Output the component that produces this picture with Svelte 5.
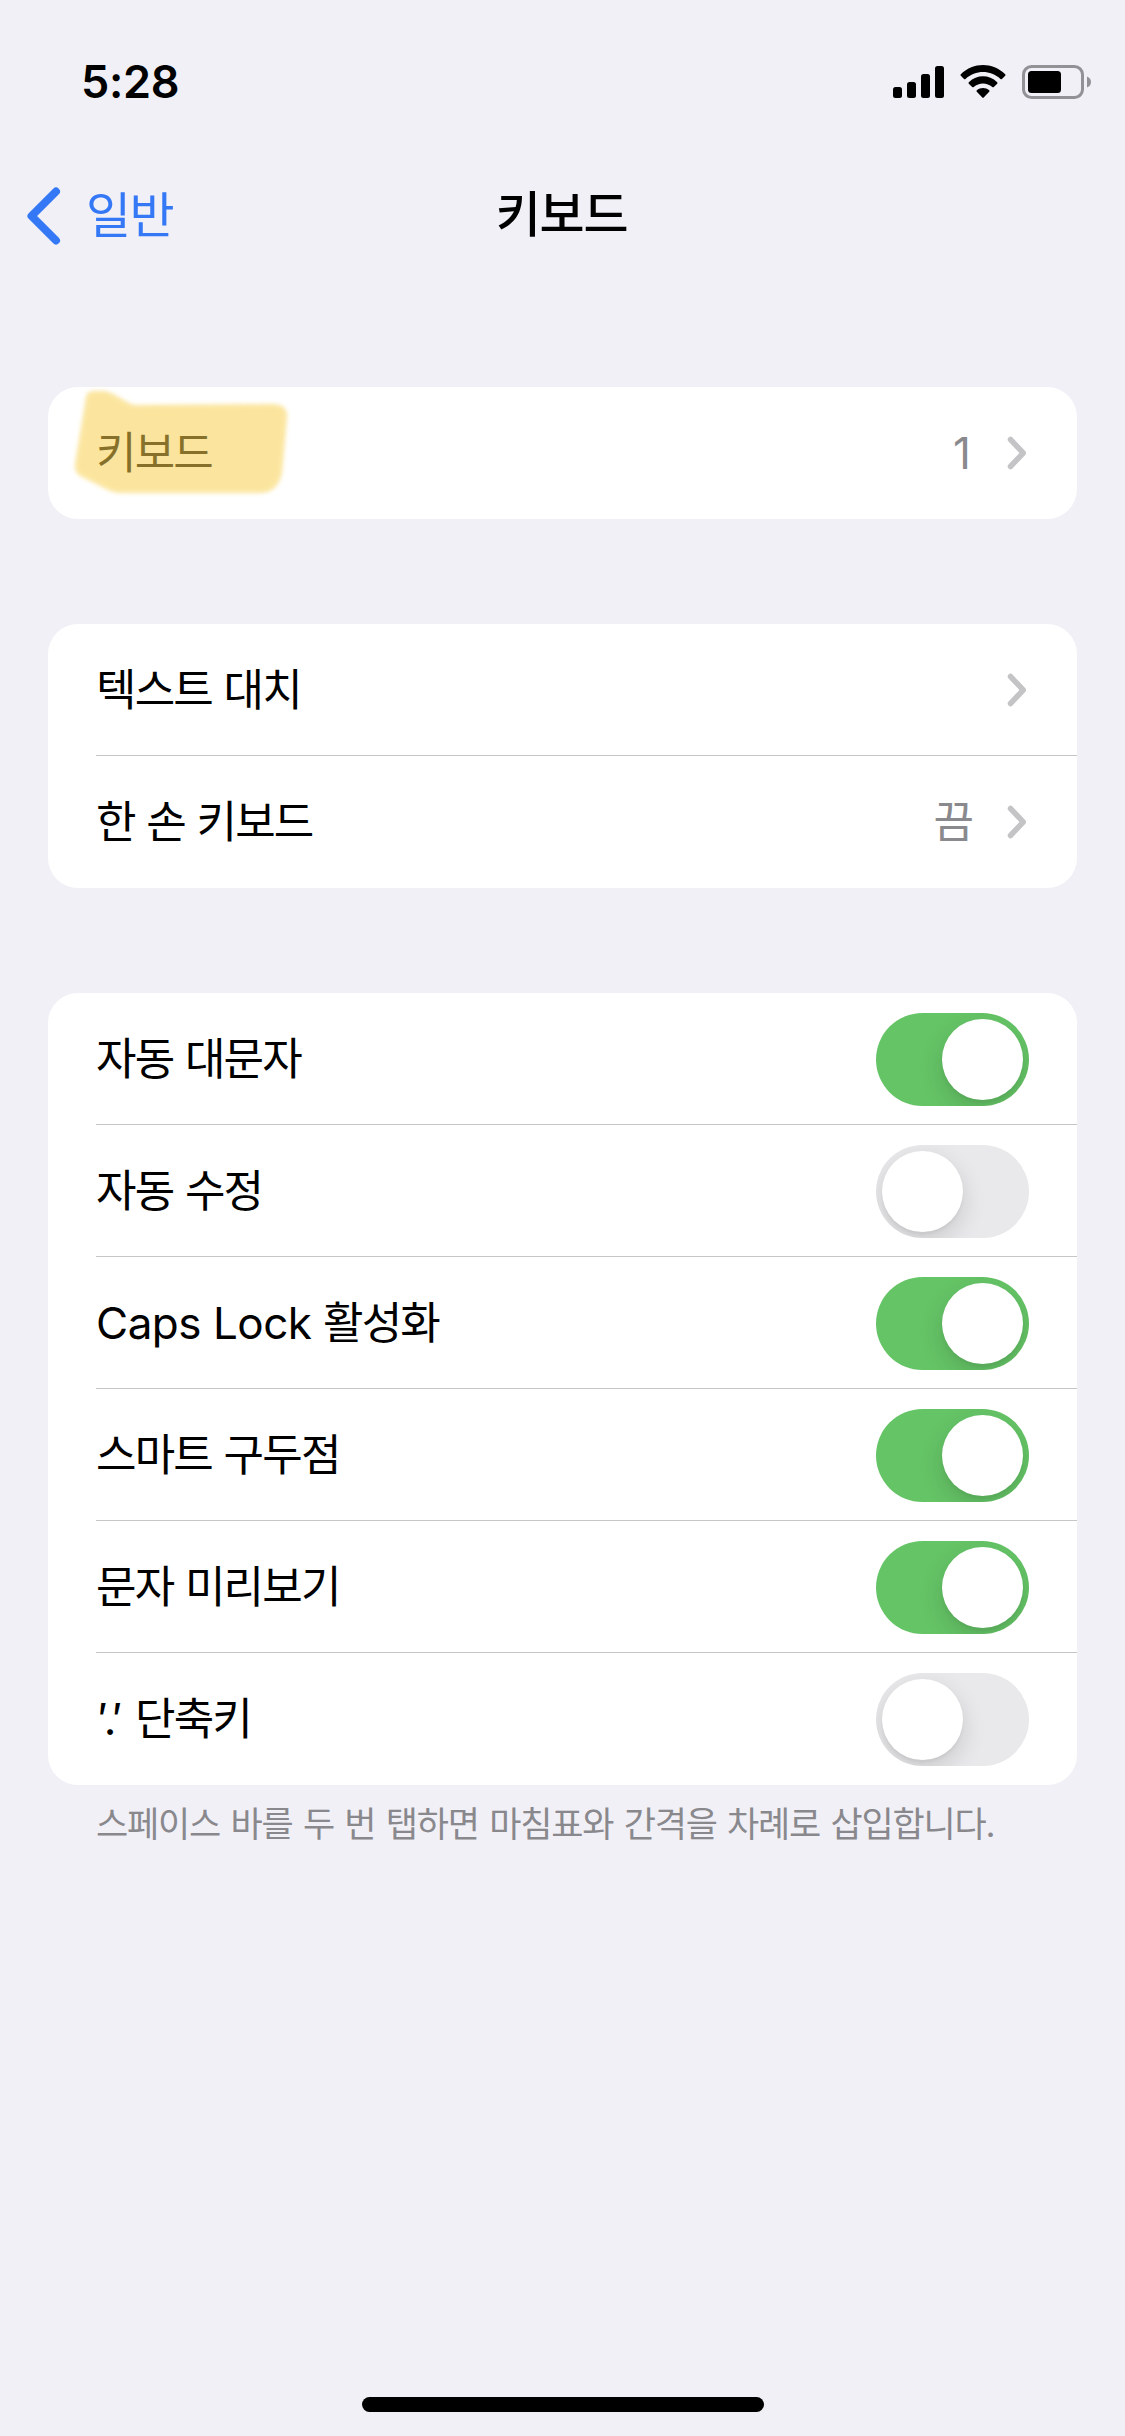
<script>
  let links = [
    { label: '텍스트 대치', value: '' },
    { label: '한 손 키보드', value: '끔' },
  ];

  let toggles = [
    { label: '자동 대문자', on: true },
    { label: '자동 수정', on: false },
    { label: 'Caps Lock 활성화', latin: 'Caps Lock', rest: ' 활성화', on: true },
    { label: '스마트 구두점', on: true },
    { label: '문자 미리보기', on: true },
    { label: '단축키', shortcut: true, on: false },
  ];

  function flip(i) {
    toggles[i].on = !toggles[i].on;
  }
</script>

{#snippet chevron()}
  <svg class="chevron" width="20" height="34" viewBox="0 0 20 34" aria-hidden="true">
    <path d="M3.5 3.5 L16.2 17 L3.5 30.5" />
  </svg>
{/snippet}

<div class="screen">
  <header class="status">
    <span class="time">5:28</span>
    <div class="indicators">
      <svg width="51" height="34" viewBox="0 0 51 34" aria-hidden="true">
        <rect x="0" y="22" width="9" height="11" rx="2.5" />
        <rect x="14" y="17" width="9" height="16" rx="2.5" />
        <rect x="28" y="9" width="9" height="24" rx="2.5" />
        <rect x="42" y="1" width="9" height="32" rx="2.5" />
      </svg>
      <svg class="wifi" width="46" height="34" viewBox="0 0 46 34" aria-hidden="true">
        <path d="M0.8 9.2 C13.5 -3 32.5 -3 45.2 9.2 Q45.9 10 45.2 10.7 L42 13.9 Q41.3 14.6 40.5 13.9 C30.5 4.6 15.5 4.6 5.5 13.9 Q4.7 14.6 4 13.9 L0.8 10.7 Q0.1 10 0.8 9.2 Z" />
        <path d="M8.8 17.2 C17 9.4 29 9.4 37.2 17.2 Q37.9 18 37.2 18.7 L33.8 22 Q33.1 22.6 32.3 22 C27 17.2 19 17.2 13.7 22 Q12.9 22.6 12.2 22 L8.8 18.7 Q8.1 18 8.8 17.2 Z" />
        <path d="M16.8 25.3 C20.4 22.2 25.6 22.2 29.2 25.3 Q29.9 26 29.2 26.8 L23.7 32.6 Q23 33.3 22.3 32.6 L16.8 26.8 Q16.1 26 16.8 25.3 Z" />
      </svg>
      <svg class="battery" width="70" height="34" viewBox="0 0 70 34" aria-hidden="true">
        <rect class="case" x="1.5" y="1.5" width="59" height="31" rx="8" />
        <rect x="6" y="6" width="33" height="22" rx="3.5" />
        <path class="cap" d="M65 11.5 Q69 13 69 17 Q69 21 65 22.5 Z" />
      </svg>
    </div>
  </header>

  <nav class="navbar">
    <button type="button" class="back">
      <svg width="34" height="58" viewBox="0 0 34 58" aria-hidden="true">
        <path d="M29 4.5 L4.5 29 L29 53.5" />
      </svg>
      <span>일반</span>
    </button>
    <h1>키보드</h1>
  </nav>

  <main>
    <section class="card">
      <div class="row">
        <span class="label">키보드</span>
        <span class="value digit">1</span>
        {@render chevron()}
        <svg class="marker" width="236" height="128" viewBox="0 0 236 128" aria-hidden="true">
          <path d="M22 16 Q23 10 30 10 L39 10 Q44 10 49 13 L65 22 Q68 24 74 24 L209 23 Q224 24 223 36 L218 92 Q214 111 197 112 L58 112 Q50 112 44 109 L18 96 Q10 92 11 83 Z" />
        </svg>
      </div>
    </section>

    <section class="card">
      {#each links as link}
        <div class="row">
          <span class="label">{link.label}</span>
          <span class="value">{link.value}</span>
          {@render chevron()}
        </div>
      {/each}
    </section>

    <section class="card">
      {#each toggles as item, i}
        <div class="row">
          {#if item.latin}
            <span class="label"><span class="latin">{item.latin}</span>{item.rest}</span>
          {:else if item.shortcut}
            <span class="label"><span class="quote">′.′</span>{item.label}</span>
          {:else}
            <span class="label">{item.label}</span>
          {/if}
          <button
            type="button"
            class="switch"
            class:on={item.on}
            role="switch"
            aria-checked={item.on}
            aria-label={item.label}
            on:click={() => flip(i)}
          >
            <span class="knob"></span>
          </button>
        </div>
      {/each}
    </section>
    <p class="note">스페이스 바를 두 번 탭하면 마침표와 간격을 차례로 삽입합니다.</p>
  </main>

  <div class="home-bar"></div>
</div>

<style>
  :global(body) {
    margin: 0;
    background: #f1f0f6;
  }
  .screen {
    box-sizing: border-box;
    width: 1125px;
    height: 2436px;
    display: flex;
    flex-direction: column;
    overflow: hidden;
    background: #f1f0f6;
    color: #000;
    font-family: Inter, "Noto Sans CJK KR", sans-serif;
    font-size: 44px;
    line-height: 60px;
  }
  button {
    border: 0;
    padding: 0;
    background: transparent;
    font: inherit;
    cursor: pointer;
  }
  .status {
    height: 132px;
    box-sizing: border-box;
    padding: 32px 33px 0 81px;
    display: flex;
    justify-content: space-between;
    align-items: center;
  }
  .time {
    font-size: 45px;
    font-weight: 600;
    letter-spacing: -0.3px;
  }
  .indicators {
    display: flex;
    align-items: center;
  }
  .wifi {
    margin-left: 16px;
  }
  .battery {
    margin-left: 16px;
  }
  .case {
    fill: none;
    stroke: #929196;
    stroke-width: 3;
  }
  .cap {
    fill: #929196;
  }
  .navbar {
    height: 168px;
    display: grid;
    grid-template-columns: 1fr auto 1fr;
    align-items: start;
    padding: 0 29px 0 27px;
  }
  .back {
    display: flex;
    align-items: center;
    gap: 25px;
    margin-top: 54px;
    color: #3478f6;
    font-size: 49px;
    letter-spacing: -1.5px;
  }
  .back path {
    fill: none;
    stroke: #3478f6;
    stroke-width: 8;
    stroke-linecap: round;
    stroke-linejoin: round;
  }
  h1 {
    margin: 53px 0 0;
    font-size: 49px;
    font-weight: 500;
    letter-spacing: -1.3px;
  }
  main {
    flex: 1;
    padding: 87px 48px 0;
  }
  .card {
    margin-bottom: 105px;
    border-radius: 30px;
    background: #fff;
  }
  .card:last-of-type {
    margin-bottom: 0;
  }
  .row {
    position: relative;
    box-sizing: border-box;
    height: 132px;
    padding: 0 48px;
    display: flex;
    align-items: center;
  }
  .row:not(:last-child)::after {
    content: '';
    position: absolute;
    left: 48px;
    right: 0;
    bottom: 0;
    height: 1px;
    background: #c6c6c8;
  }
  .label {
    flex: 1;
    letter-spacing: -1.8px;
    word-spacing: 1px;
  }
  .latin {
    letter-spacing: -0.5px;
    word-spacing: 0;
  }
  .quote {
    display: inline-block;
    width: 37px;
    padding-left: 2px;
    letter-spacing: -4px;
  }
  .value {
    color: #8a8a8e;
    letter-spacing: -1px;
  }
  .digit {
    letter-spacing: 0;
  }
  .chevron {
    margin-left: 36px;
    margin-right: 2px;
  }
  .value:not(.digit) + .chevron {
    margin-left: 34px;
  }
  .chevron path {
    fill: none;
    stroke: #c4c4c6;
    stroke-width: 5.5;
    stroke-linecap: round;
    stroke-linejoin: round;
  }
  .marker {
    position: absolute;
    left: 16px;
    top: -6px;
    opacity: 0.54;
    filter: blur(2px);
    pointer-events: none;
  }
  .marker path {
    fill: #f8d04e;
  }
  .switch {
    width: 153px;
    height: 93px;
    padding: 6px;
    border-radius: 47px;
    background: #e9e9eb;
    display: flex;
    overflow: hidden;
  }
  .switch.on {
    background: #65c466;
    justify-content: flex-end;
  }
  .knob {
    width: 81px;
    height: 81px;
    border-radius: 50%;
    background: #fff;
    box-shadow: 0 9px 24px rgba(0, 0, 0, 0.14), 0 3px 3px rgba(0, 0, 0, 0.04);
  }
  .note {
    margin: 14px 48px 0;
    color: #89888d;
    font-size: 35px;
    line-height: 50px;
    letter-spacing: -1.2px;
    word-spacing: 1.8px;
    white-space: nowrap;
  }
  .home-bar {
    width: 402px;
    height: 15px;
    margin: 0 auto 24px;
    border-radius: 8px;
    background: #000;
  }
</style>
